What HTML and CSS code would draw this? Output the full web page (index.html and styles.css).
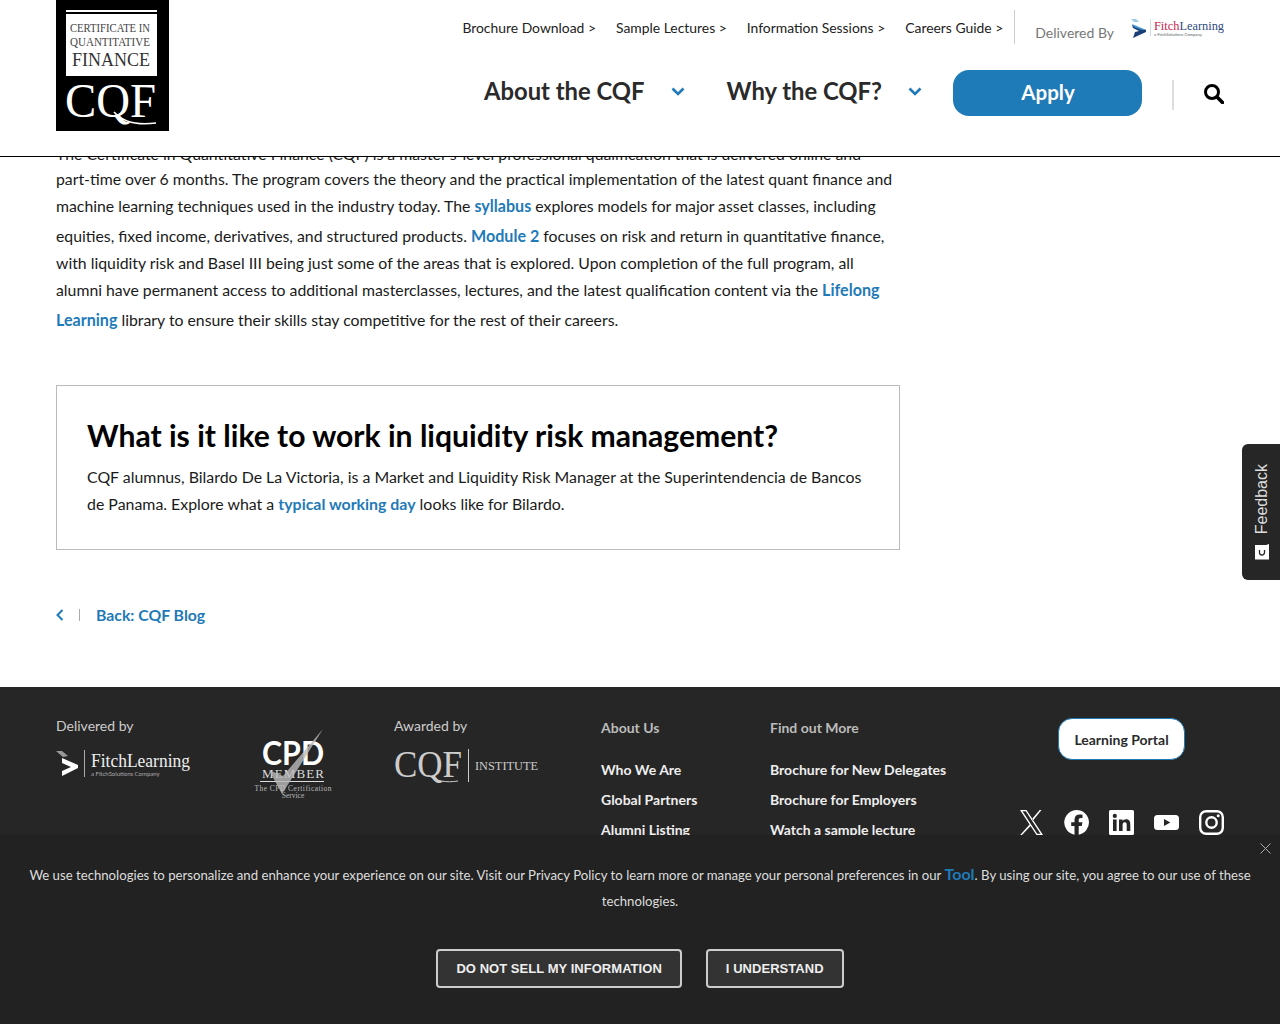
FILE: index.html
```html
<!DOCTYPE html>
<html>
<head>
<title>Liquidity risk management - CQF</title>
<meta charset="utf-8" />
<link rel="stylesheet" href="styles.css">
</head>
<body>
<!-- fixed header, sits over the article -->
<header class="header">
  <a class="logo" href="#">
    <svg width="113" height="131" viewBox="0 0 113 131">
      <rect width="113" height="131" fill="#000"/>
      <rect x="10" y="10" width="91" height="2" fill="#fff"/>
      <rect x="10" y="14" width="91" height="62" fill="#fff"/>
      <text x="14" y="32" font-size="11.500" textLength="80" lengthAdjust="spacingAndGlyphs" class="logo-serif" fill="#444">CERTIFICATE IN</text>
      <text x="14" y="46" font-size="11.500" textLength="80" lengthAdjust="spacingAndGlyphs" class="logo-serif" fill="#444">QUANTITATIVE</text>
      <text x="16" y="66" font-size="19" textLength="78" lengthAdjust="spacingAndGlyphs" class="logo-serif" fill="#333">FINANCE</text>
      <text x="9" y="117" font-size="48" textLength="91" lengthAdjust="spacingAndGlyphs" class="logo-serif" fill="#fff">CQF</text>
      <path d="M58 112c8 9 20 14 42 11" fill="none" stroke="#fff" stroke-width="1.600"/>
    </svg>
  </a>
  <div class="header-right">
    <div class="top-nav">
      <a href="#">Brochure Download &gt;</a>
      <a href="#">Sample Lectures &gt;</a>
      <a href="#">Information Sessions &gt;</a>
      <a href="#">Careers Guide &gt;</a>
      <div class="delivered">
        <span>Delivered By</span>
        <svg width="94" height="22" viewBox="0 0 94 22">
          <path d="M2 8l14 5v2L3 21l2-6 4-1-6-3z" fill="#1c3f78"/>
          <path d="M2 7l14 6h-4L4 10z" fill="#3e97cf"/>
          <path d="M1 2h5l3 3H4z" fill="#9ecbe6"/>
          <rect x="20" y="2" width="1" height="17" fill="#cfe0ea"/>
          <text x="24" y="13" font-size="13" textLength="70" lengthAdjust="spacingAndGlyphs" class="logo-serif" fill="#c8244f">Fitch<tspan fill="#2f4a80">Learning</tspan></text>
          <text x="24" y="19" font-size="4.200" class="logo-sans" fill="#566">a FitchSolutions Company</text>
        </svg>
      </div>
    </div>
    <nav class="main-nav">
      <a class="nav-item" href="#">About the CQF</a>
      <svg class="chev" width="14" height="9" viewBox="0 0 14 9"><path d="M1.500 1.500L7 7l5.500-5.500" fill="none" stroke="#1f7ab8" stroke-width="2.600"/></svg>
      <a class="nav-item" href="#">Why the CQF?</a>
      <svg class="chev" width="14" height="9" viewBox="0 0 14 9"><path d="M1.500 1.500L7 7l5.500-5.500" fill="none" stroke="#1f7ab8" stroke-width="2.600"/></svg>
      <a class="apply" href="#">Apply</a>
      <span class="nav-sep"></span>
      <svg class="search" width="20" height="20" viewBox="0 0 20 20"><circle cx="8" cy="8" r="6.500" fill="none" stroke="#000" stroke-width="3"/><path d="M13 13l5.500 5.500" stroke="#000" stroke-width="3.600" stroke-linecap="round"/></svg>
    </nav>
  </div>
</header>

<main class="article">
  <p class="intro">
    <span class="line first">The Certificate in Quantitative Finance (CQF) is a master’s-level professional qualification that is delivered online and</span>
    <span class="line">part-time over 6 months. The program covers the theory and the practical implementation of the latest quant finance and</span>
    <span class="line">machine learning techniques used in the industry today. The <a href="#">syllabus</a> explores models for major asset classes, including</span>
    <span class="line tall">equities, fixed income, derivatives, and structured products. <a href="#">Module 2</a> focuses on risk and return in quantitative finance,</span>
    <span class="line">with liquidity risk and Basel III being just some of the areas that is explored. Upon completion of the full program, all</span>
    <span class="line">alumni have permanent access to additional masterclasses, lectures, and the latest qualification content via the <a href="#">Lifelong</a></span>
    <span class="line tall"><a href="#">Learning</a> library to ensure their skills stay competitive for the rest of their careers.</span>
  </p>
  <section class="callout">
    <h2>What is it like to work in liquidity risk management?</h2>
    <p>CQF alumnus, Bilardo De La Victoria, is a Market and Liquidity Risk Manager at the Superintendencia de Bancos de Panama. Explore what a <a href="#">typical working day</a> looks like for Bilardo.</p>
  </section>
  <div class="back">
    <svg width="8" height="12" viewBox="0 0 8 12"><path d="M6.500 1L1.500 6l5 5" fill="none" stroke="#1f7ab8" stroke-width="2"/></svg>
    <span class="back-sep"></span>
    <a href="#">Back: CQF Blog</a>
  </div>
</main>

<footer class="footer">
  <div class="foot-col col-fitch">
    <div class="foot-label">Delivered by</div>
    <svg width="136" height="30" viewBox="0 0 136 30">
      <path d="M6 9l16 7v3L6 27v-5l9-4-9-4z" fill="#fff"/>
      <path d="M0 2h6l6 5-5 1z" fill="#999"/>
      <rect x="28" y="1" width="1" height="27" fill="#aaa"/>
      <text x="35" y="18" font-size="18" textLength="99" lengthAdjust="spacingAndGlyphs" class="logo-serif" fill="#eee">FitchLearning</text>
      <text x="35" y="27" font-size="6" class="logo-sans" fill="#aaa">a FitchSolutions Company</text>
    </svg>
  </div>
  <div class="foot-col col-cpd">
    <svg width="80" height="72" viewBox="0 0 80 72">
      <text x="40" y="37" font-size="33" font-weight="700" text-anchor="middle" textLength="62" lengthAdjust="spacingAndGlyphs" class="logo-sans" fill="#fff">CPD</text>
      <text x="40" y="50" font-size="13" text-anchor="middle" textLength="62" class="logo-serif" fill="#ddd">MEMBER</text>
      <rect x="7" y="53" width="64" height="1" fill="#ddd"/>
      <text x="40" y="63" font-size="7.500" text-anchor="middle" textLength="77" class="logo-serif" fill="#bbb">The CPD Certification</text>
      <text x="40" y="70" font-size="7.500" text-anchor="middle" class="logo-serif" fill="#bbb">Service</text>
      <path d="M16 42l13 24L70 1 30 48z" fill="#bbb" opacity=".8"/>
    </svg>
  </div>
  <div class="foot-col col-award">
    <div class="foot-label">Awarded by</div>
    <svg width="146" height="36" viewBox="0 0 146 36">
      <text x="0" y="28" font-size="38" textLength="68" lengthAdjust="spacingAndGlyphs" class="logo-serif" fill="#ccc">CQF</text>
      <path d="M34 26c8 6 18 8 30 6" fill="none" stroke="#ccc"/>
      <rect x="74" y="0" width="1" height="33" fill="#ccc"/>
      <text x="81" y="21" font-size="13" textLength="63" lengthAdjust="spacingAndGlyphs" class="logo-serif" fill="#ccc">INSTITUTE</text>
    </svg>
  </div>
  <div class="foot-col col-about">
    <div class="foot-head">About Us</div>
    <a href="#">Who We Are</a>
    <a href="#">Global Partners</a>
    <a href="#">Alumni Listing</a>
  </div>
  <div class="foot-col col-more">
    <div class="foot-head">Find out More</div>
    <a href="#">Brochure for New Delegates</a>
    <a href="#">Brochure for Employers</a>
    <a href="#">Watch a sample lecture</a>
  </div>
  <div class="foot-col col-right">
    <a class="portal" href="#">Learning Portal</a>
    <div class="social">
      <svg width="25" height="25" viewBox="0 0 25 25"><path d="M1 0h6.500L24 25h-6.500zM3.500 1.300L18.200 23.700h3.300L6.800 1.300zM22.500 0L14 10.500l-1-1.500L20.700 0zM10.500 14.500l1 1.500L3 25H1.200z" fill="#fff" fill-rule="evenodd"/></svg>
      <svg width="25" height="25" viewBox="0 0 25 25"><path d="M12.500 0a12.500 12.500 0 0 1 2.200 24.800V16h3.100l.6-3.700h-3.700V10c0-1.100.5-2 2.200-2h1.600V4.800c-1-.2-2-.3-3-.3-3 0-5 1.800-5 5.100v2.700H7.200V16h3.300v8.800A12.500 12.500 0 0 1 12.500 0z" fill="#fff"/></svg>
      <svg width="25" height="25" viewBox="0 0 25 25"><path fill-rule="evenodd" d="M1.500 0h22A1.500 1.500 0 0 1 25 1.500v22a1.500 1.500 0 0 1-1.500 1.500h-22A1.500 1.500 0 0 1 0 23.500v-22A1.500 1.500 0 0 1 1.500 0zM4 9.500V21h3.600V9.500zM5.800 3.800a2.100 2.100 0 1 0 0 4.200 2.100 2.100 0 0 0 0-4.200zM10 9.500V21h3.600v-5.700c0-1.500.3-3 2.200-3s1.900 1.700 1.900 3.100V21h3.600v-6.300c0-3.100-.7-5.500-4.300-5.500-1.700 0-2.900 1-3.400 1.900V9.500z" fill="#fff"/></svg>
      <svg width="25" height="25" viewBox="0 0 25 25"><path fill-rule="evenodd" d="M3.500 5h18A3.500 3.500 0 0 1 25 8.500v8a3.500 3.500 0 0 1-3.500 3.500h-18A3.500 3.500 0 0 1 0 16.500v-8A3.500 3.500 0 0 1 3.500 5zM10 9v7l6.300-3.500z" fill="#fff"/></svg>
      <svg width="25" height="25" viewBox="0 0 25 25"><rect x="1.200" y="1.200" width="22.600" height="22.600" rx="6" fill="none" stroke="#fff" stroke-width="2.400"/><circle cx="12.500" cy="12.500" r="5.200" fill="none" stroke="#fff" stroke-width="2.400"/><circle cx="19.200" cy="5.800" r="1.500" fill="#fff"/></svg>
    </div>
  </div>
</footer>

<aside class="feedback">
  <span class="feedback-text">Feedback</span>
  <svg width="16" height="16" viewBox="0 0 16 16"><path d="M1 1h11l3-1v15.500H1z" fill="#fff"/><path d="M5.500 6v2.500a2.500 2.500 0 0 0 5 0V6" fill="none" stroke="#262626" stroke-width="1.300"/></svg>
</aside>

<div class="cookie">
  <svg class="cookie-close" width="11" height="11" viewBox="0 0 11 11"><path d="M.5.500l10 10M10.500.500l-10 10" stroke="#aaa" stroke-width="1"/></svg>
  <p>We use technologies to personalize and enhance your experience on our site. Visit our Privacy Policy to learn more or manage your personal preferences in our <a href="#">Tool</a>. By using our site, you agree to our use of these technologies.</p>
  <div class="cookie-btns">
    <button>Do not sell my information</button>
    <button>I understand</button>
  </div>
</div>
</body>
</html>
```

FILE: styles.css
```css
*{
	margin:0;
	padding:0;
	box-sizing:border-box;
}
html,body{
	height:1024px;
	overflow:hidden;
}
body{
	font-family:"Lato","Liberation Sans",sans-serif;
	font-size:15.8px;
	color:#1a1a1a;
	background:#fff;
}
a{
	text-decoration:none;
}
.logo-serif{
	font-family:"Liberation Serif",serif;
}
.logo-sans{
	font-family:"Lato",sans-serif;
}

/* header */
.header{
	position:fixed;
	top:0;
	left:0;
	width:100%;
	height:157px;
	padding:0 56px;
	background:#fff;
	border-bottom:1px solid #000;
	display:flex;
	justify-content:space-between;
	z-index:10;
}
.logo{
	display:block;
	height:131px;
}
.logo svg{
	display:block;
}
.header-right{
	display:flex;
	flex-direction:column;
	align-items:flex-end;
}
.top-nav{
	display:flex;
	align-items:flex-start;
	padding-top:10px;
	height:70px;
}
.top-nav>a{
	font-size:13.9px;
	line-height:36px;
	color:#222;
	margin-right:20px;
}
.top-nav>a:nth-child(4){
	margin-right:11px;
}
.delivered{
	display:flex;
	align-items:flex-start;
	height:34px;
	padding-left:20px;
	border-left:1px solid #ccc;
}
.delivered span{
	font-size:14px;
	color:#777;
	line-height:46px;
	margin-right:16px;
}
.delivered svg{
	margin-top:7px;
}
.main-nav{
	display:flex;
	align-items:center;
	height:46px;
}
.nav-item{
	font-size:23.8px;
	font-weight:700;
	color:#2a2a2a;
	margin-top:-4px;
}
.chev{
	margin:-3px 42px 0 26px;
}
.chev:nth-of-type(2){
	margin-right:31px;
}
.apply{
	display:block;
	width:189px;
	height:46px;
	line-height:45px;
	padding-left:1px;
	text-align:center;
	font-size:20.5px;
	font-weight:700;
	color:#fff;
	background:#1f7ab8;
	border-radius:16px;
}
.nav-sep{
	width:2px;
	height:30px;
	background:#ddd;
	margin:4px 30px 0 30px;
}
.search{
	margin-top:2px;
}

/* article */
.article{
	padding:142px 56px 0;
}
.intro{
	width:860px;
	height:228px;
}
.line{
	display:block;
	line-height:27px;
	white-space:nowrap;
}
.line.first{
	line-height:23px;
}
.line.tall{
	margin-top:3px;
}
.article a{
	color:#1f7ab8;
	font-weight:700;
}
.line a{
	font-size:16.1px;
}
.callout{
	width:844px;
	height:165px;
	margin-top:15px;
	padding:29px 30px 0;
	border:1px solid #bbb;
}
.callout h2{
	font-size:30.1px;
	line-height:40px;
	font-weight:700;
	color:#000;
	margin-bottom:8px;
}
.callout p{
	font-size:15.9px;
	line-height:27px;
}
.back{
	display:flex;
	align-items:center;
	margin-top:51px;
	height:27px;
}
.back svg{
	margin-right:15px;
}
.back-sep{
	width:1px;
	height:12px;
	background:#aaa;
	margin-right:16px;
}

/* footer */
.footer{
	position:fixed;
	top:687px;
	left:0;
	width:100%;
	height:337px;
	padding:31px 56px 0;
	background:#262626;
	display:flex;
	font-size:14px;
}
.foot-col{
	display:flex;
	flex-direction:column;
}
.foot-label{
	color:#ccc;
	margin:-1px 0 15px;
	line-height:17px;
}
.col-fitch{
	width:197px;
}
.col-cpd{
	width:141px;
	padding-top:10px;
}
.col-award{
	width:207px;
}
.col-about{
	width:169px;
}
.col-more{
	width:249px;
}
.foot-head{
	color:#bbb;
	font-weight:700;
	line-height:20px;
	margin-bottom:17px;
}
.foot-col>a{
	color:#eee;
	font-weight:700;
	line-height:30px;
}
.col-right{
	width:205px;
}
.foot-col>a.portal{
	display:block;
	width:127px;
	height:42px;
	margin-left:39px;
	line-height:41px;
	text-align:center;
	color:#2a2a2a;
	background:#fff;
	border:1px solid #1f7ab8;
	border-radius:14px;
}
.social{
	display:flex;
	justify-content:space-between;
	margin-top:50px;
}

/* feedback tab */
.feedback{
	position:fixed;
	top:444px;
	right:0;
	width:38px;
	height:136px;
	padding:0 0 20px 1px;
	background:#262626;
	border-radius:6px 0 0 6px;
	display:flex;
	flex-direction:column;
	align-items:center;
	justify-content:flex-end;
	z-index:20;
}
.feedback-text{
	writing-mode:vertical-rl;
	transform:rotate(180deg);
	font-family:"Liberation Sans",sans-serif;
	font-size:16px;
	color:#ddd;
	margin-bottom:10px;
}

/* cookie banner */
.cookie{
	position:fixed;
	left:0;
	bottom:0;
	width:100%;
	height:189px;
	padding:26px 20px 0;
	background:#222;
	text-align:center;
	z-index:30;
}
.cookie p{
	font-size:13.18px;
	line-height:26px;
	color:#ddd;
}
.cookie p a{
	font-size:16px;
	font-weight:700;
	color:#1f7ab8;
}
.cookie-close{
	position:absolute;
	top:8px;
	right:9px;
}
.cookie-btns{
	display:flex;
	justify-content:center;
	gap:24px;
	margin-top:35px;
}
.cookie-btns button{
	height:39px;
	padding:0 18px;
	font-family:"Liberation Sans",sans-serif;
	font-size:13px;
	font-weight:700;
	letter-spacing:.04px;
	text-transform:uppercase;
	color:#eee;
	background:#333;
	border:2px solid #ccc;
	border-radius:4px;
}
```
